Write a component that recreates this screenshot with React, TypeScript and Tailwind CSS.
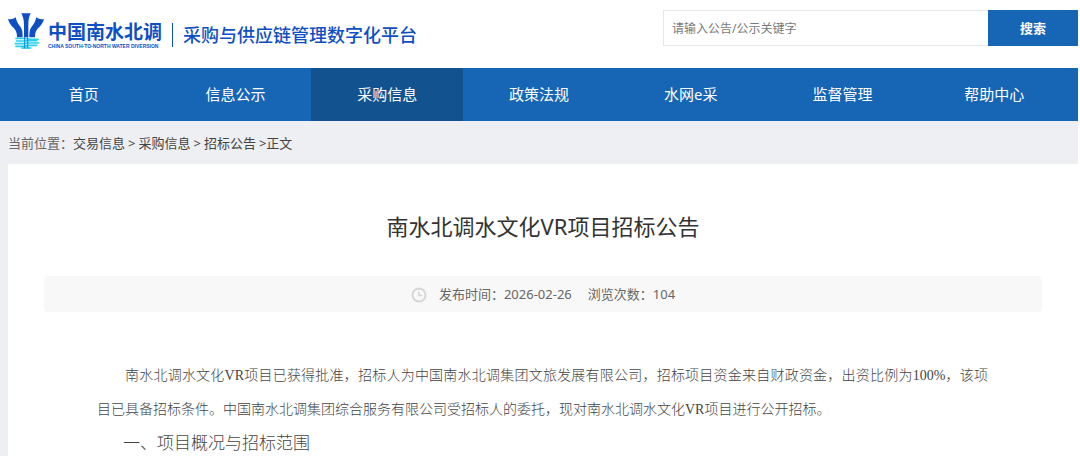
import React from 'react';

const navItems = [
  { title: '首页' },
  { title: '信息公示' },
  { title: '采购信息', active: true },
  { title: '政策法规' },
  { title: '水网e采' },
  { title: '监督管理' },
  { title: '帮助中心' },
];

const Logo = () => {
  return (
    <svg className="w-9 h-9 shrink-0" viewBox="0 0 108 108" aria-hidden="true">
      <g fill="#0f4fc4">
        <path d="M40 1h28c-5 10-7 20-7 34v38H48V35C48 21 45 11 40 1z" />
        <path d="M0 18c10 2 16 0 23-5 3 14 8 20 14 28 6 8 7 17 7 32H27c0-12-2-19-9-27C9 37 3 30 0 18z" />
        <path d="M108 18c-10 2-16 0-23-5-3 14-8 20-14 28-6 8-7 17-7 32h17c0-12 2-19 9-27 9-9 15-16 18-28z" />
      </g>
      <g fill="none" stroke="#2ad0ee" strokeWidth="5">
        <path d="M22 76h26c8 0 8 3 16 3h28" />
        <path d="M24 84h24c8 0 10-1 18-1h22" />
        <path d="M20 92h26c8 0 10-2 18-2h30" />
        <path d="M22 100h24c8 0 10-3 18-3h24" />
        <path d="M40 105h30" />
      </g>
      <path d="M50 72v34M59 72v34" stroke="#1486dc" strokeWidth="3" />
    </svg>
  );
};

const Header = () => {
  return (
    <header className="flex justify-between items-start h-[68px] pl-2">
      <a href="#" className="flex items-center pt-[13px] text-[#0f4fc4]">
        <Logo />
        <span className="ml-1 pt-2 flex flex-col">
          <span className="text-[19px] leading-[22px] font-bold">中国南水北调</span>
          <span className="text-[5px] leading-[6px] font-bold font-['Liberation_Sans',sans-serif] whitespace-nowrap">
            CHINA SOUTH-TO-NORTH WATER DIVERSION
          </span>
        </span>
        <span className="w-px h-6 mt-2 ml-2.5 mr-2.5 bg-[#0f4fc4]" />
        <span className="text-lg leading-6 font-medium pt-2">采购与供应链管理数字化平台</span>
      </a>
      <form className="flex mt-2.5 h-9 w-[415px]">
        <input
          type="text"
          aria-label="搜索关键字"
          placeholder="请输入公告/公示关键字"
          className="flex-1 min-w-0 border border-r-0 border-[#e6e6e6] px-2 pt-0.5 text-xs placeholder:text-[#7a7a7a] focus:outline-none"
        />
        <button type="button" className="w-[90px] pt-0.5 bg-[#1765b5] text-white text-[13px] font-bold">
          搜索
        </button>
      </form>
    </header>
  );
};

const Nav = () => {
  return (
    <nav className="flex bg-[#1765b5] px-2">
      {navItems.map((item) => (
        <a
          key={item.title}
          href="#"
          className={`flex-1 text-center text-white text-[15px] leading-[53px] ${item.active ? 'bg-[#12528f]' : ''}`}
        >
          {item.title}
        </a>
      ))}
    </nav>
  );
};

const Breadcrumb = () => {
  return (
    <div className="flex items-center h-[43px] pt-0.5 text-[13px] text-[#444]">
      <span className="text-[#666] w-[65px] whitespace-nowrap">当前位置：</span>
      <a href="#">交易信息</a>
      <span className="px-[3px]">&gt;</span>
      <a href="#">采购信息</a>
      <span className="px-[3px]">&gt;</span>
      <a href="#">招标公告</a>
      <span className="pl-[3px]">&gt;</span>
      <span>正文</span>
    </div>
  );
};

const ClockIcon = () => {
  return (
    <svg className="w-4 h-4 mr-3" viewBox="0 0 16 16" fill="none" stroke="#d6d6d6" strokeWidth="2" aria-hidden="true">
      <circle cx="8" cy="8" r="6.5" />
      <path d="M8 4.5V8.5H11" strokeWidth="1.5" />
    </svg>
  );
};

const App = () => {
  return (
    <div className="bg-white pr-0.5 font-['Noto_Sans','Noto_Sans_CJK_SC',sans-serif]">
      <Header />
      <Nav />
      <main className="bg-[#edeff3] pl-2">
        <Breadcrumb />
        <article className="bg-white pt-[46px]">
          <h1 className="text-center text-[22px] leading-8 text-[#333]">南水北调水文化VR项目招标公告</h1>
          <div className="flex justify-center items-center h-9 mt-[34px] mx-9 pt-0.5 rounded-sm bg-[#f8f8f8] text-[13px] text-[#666]">
            <ClockIcon />
            <span className="mr-4">发布时间：2026-02-26</span>
            <span>浏览次数：104</span>
          </div>
          <div className="mt-[47px] pl-[89px] pr-[90px] text-[#444] font-['Liberation_Serif','Noto_Sans_CJK_SC',serif] font-light">
            <p className="indent-7 text-sm leading-[34px] text-justify">
              南水北调水文化VR项目已获得批准，招标人为中国南水北调集团文旅发展有限公司，招标项目资金来自财政资金，出资比例为100%，该项目已具备招标条件。中国南水北调集团综合服务有限公司受招标人的委托，现对南水北调水文化VR项目进行公开招标。
            </p>
            <h2 className="pl-[26px] text-[17px] leading-[34px]">一、项目概况与招标范围</h2>
          </div>
        </article>
      </main>
    </div>
  );
};

export default App;
